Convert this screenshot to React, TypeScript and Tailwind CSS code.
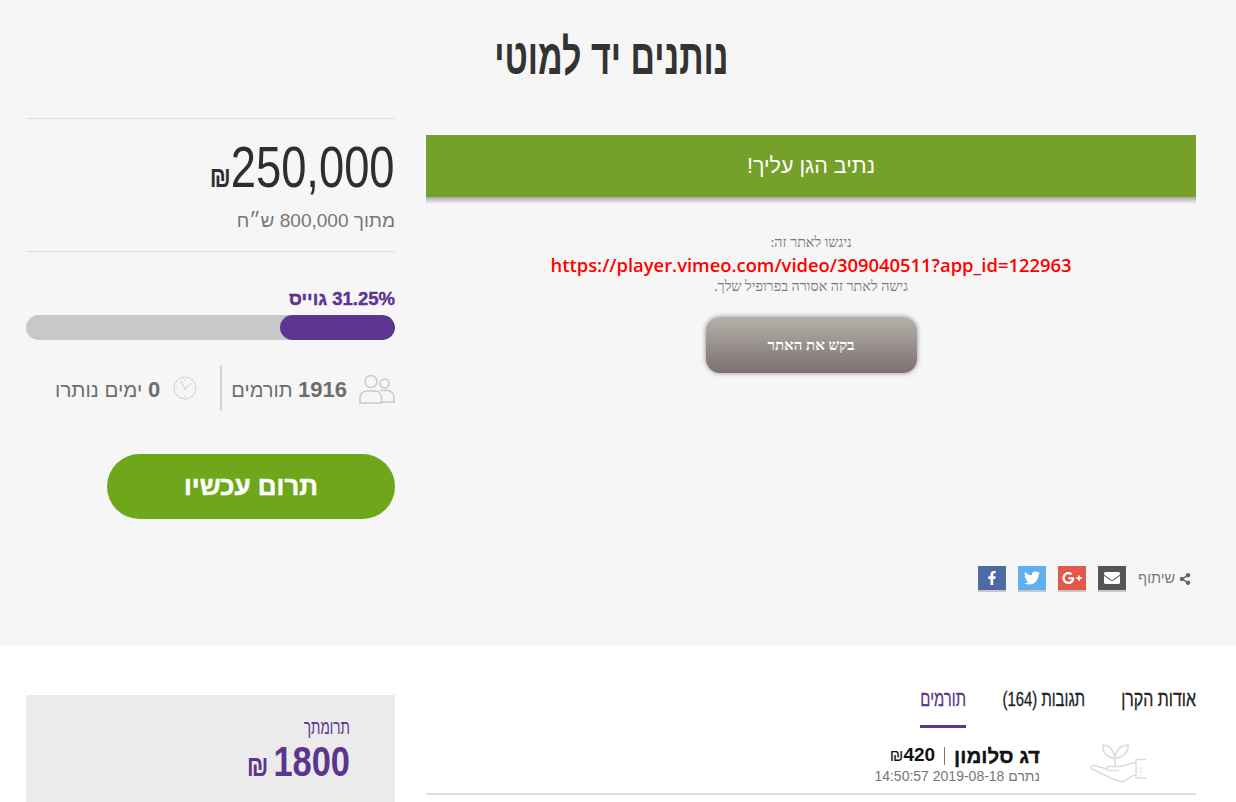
import { FaEnvelope, FaFacebookF, FaGooglePlusG, FaShareAlt, FaTwitter } from "react-icons/fa";

const sans = "font-['Liberation_Sans',sans-serif]";

function PeopleIcon() {
  return (
    <svg width="36" height="32" viewBox="0 0 36 32" fill="none" stroke="#cacaca" strokeWidth="1.6">
      <circle cx="12" cy="7.500" r="6" />
      <circle cx="25.500" cy="9.500" r="4.500" />
      <path d="M1 29v-5c0-4 3-7 7-7h8c4 0 6.500 3 6.500 7v5z" />
      <path d="M21 16.500h7c4 0 7 3 7 7V28H22.500" />
    </svg>
  );
}

function ClockIcon() {
  return (
    <svg width="24" height="24" viewBox="0 0 24 24" fill="none" stroke="#cfcfcf" strokeWidth="1">
      <circle cx="12" cy="12" r="11" />
      <circle cx="12" cy="12.500" r="1" />
      <path d="M12.500 12 18.500 7.500M11.500 11.500 8 5" />
      <path d="M12 3v1.500M12 19.500V21M3 12h1.500M19.500 12H21" />
    </svg>
  );
}

function PlantIcon() {
  return (
    <svg width="58" height="40" viewBox="0 0 58 40" fill="none" stroke="#dcdcdc" strokeWidth="1.600">
      <path d="M26 23V15M26 15c-1-7-5-13-12-13-1 7 4 13 12 13ZM26 15c0-7 6-13 13-13 1 7-5 13-13 13Z" />
      <path d="M57 16.500H47v18.500h10M47 19.500c-6 0-11 4-17 4H20c-3 0-3 4 0 4h10M47 32c-6 0-9 6.500-14 6.500-7 0-19-8-29-12-3-1-2-5 2-4l13 4" />
      <path d="M51 25h2M51 29h2" />
    </svg>
  );
}

const shares = [
  { bg: "bg-[#4c6aa3]", icon: <FaFacebookF size={14} /> },
  { bg: "bg-[#60b0f0]", icon: <FaTwitter size={16} /> },
  { bg: "bg-[#e2594b]", icon: <FaGooglePlusG size={20} /> },
  { bg: "bg-[#555555]", icon: <FaEnvelope size={16} /> },
];

export default function App() {
  return (
    <div className={`h-[802px] overflow-hidden bg-white ${sans}`}>
      <section className="h-[646px] bg-[#f6f6f6] pl-[26px] pr-[40px]">
        <h1 dir="rtl" className="flex h-[118px] items-start justify-center pt-[27px]">
          <span className="origin-center scale-x-[0.68] whitespace-nowrap text-[50px] leading-[60px] font-bold text-[#333333]">
            נותנים יד למוטי
          </span>
        </h1>

        <div className="flex gap-[31px]">
          <aside dir="rtl" className="w-[369px]">
            <div className="h-[134px] border-y border-[#dfdfdf]">
              <div className="flex h-[88px] items-end justify-start pb-[5px]">
                <span dir="ltr" className="flex origin-right scale-x-[0.795] items-baseline whitespace-nowrap text-[#2e2e2e]">
                  <span className="text-[30px] font-bold">₪</span>
                  <span className="text-[57px] leading-[70px] font-normal">250,000</span>
                </span>
              </div>
              <p className="text-[19px] leading-[28px] text-[#777777]">מתוך 800,000 ש״ח</p>
            </div>

            <p className="mt-[37px] text-[18.500px] leading-[20px] font-bold text-[#5c3590] [-webkit-text-stroke:0.4px_#5c3590]">
              <span dir="ltr">31.25%</span> גוייס
            </p>
            <div className="mt-[6px] flex h-[25px] overflow-hidden rounded-full bg-[#c8c8c8]">
              <div className="w-[115px] rounded-full bg-[#5c3590]" />
            </div>

            <div className="mt-[25px] flex h-[46px] items-center">
              <span className="mt-[4px] flex">
                <PeopleIcon />
              </span>
              <span className="mt-[2px] mr-[12px] text-[20px] text-[#6e6e6e]">
                <b className="text-[22px]">1916</b> תורמים
              </span>
              <div className="mr-[9px] ml-[23px] h-[46px] w-[2px] bg-[#d5d5d5]" />
              <ClockIcon />
              <span className="mt-[2px] mr-[13px] text-[20.500px] text-[#6e6e6e]">
                <b className="text-[22px]">0</b> ימים נותרו
              </span>
            </div>

            <button className="mt-[43px] flex h-[65px] w-[288px] items-center justify-center rounded-full bg-[#6ea71a] text-[26px] font-bold text-white [-webkit-text-stroke:0.5px_#ffffff]">
              תרום עכשיו
            </button>
          </aside>

          <main className="mt-[17px] w-[770px]">
            <div dir="rtl" className="flex h-[62px] items-center justify-center bg-[#75a12a] text-[21.500px] text-white">
              נתיב הגן עליך!
            </div>
            <div className="h-[7px] bg-gradient-to-b from-[#a8a8a8] to-[#f6f6f6]" />
            <div dir="rtl" className="mt-[30px] flex flex-col items-center">
              <p className="font-['Liberation_Serif',serif] text-[14.300px] leading-[16px] text-[#777777]">ניגשו לאתר זה:</p>
              <p dir="ltr" className="mt-[1px] font-['Open_Sans',sans-serif] text-[18.400px] leading-[27px] font-semibold text-[#ff0000]">
                https://player.vimeo.com/video/309040511?app_id=122963
              </p>
              <p className="font-['Liberation_Serif',serif] text-[14.300px] leading-[16px] text-[#777777]">גישה לאתר זה אסורה בפרופיל שלך.</p>
              <button className="mt-[23px] h-[56px] w-[211px] rounded-[14px] bg-gradient-to-b from-[#b6b1aa] to-[#7b7171] font-['Liberation_Serif',serif] text-[15px] font-bold text-white shadow-[0_0_5px_rgba(0,0,0,0.45)]">
                בקש את האתר
              </button>
            </div>
            <div className="mt-[193px] flex items-center justify-end">
              <div className="flex gap-[12px]">
                {shares.map((share, i) => (
                  <span key={i} className={`box-content flex h-[24px] w-[28px] items-center justify-center border-b-2 border-[#c8c8c8] text-white ${share.bg}`}>
                    {share.icon}
                  </span>
                ))}
              </div>
              <span dir="rtl" className="mr-[5px] ml-[12px] flex items-center gap-[4px] text-[14.500px] text-[#777777]">
                <FaShareAlt size={12} className="text-[#666666]" />
                שיתוף
              </span>
            </div>
          </main>
        </div>
      </section>

      <section className="flex gap-[31px] pt-[49px] pl-[26px] pr-[40px]">
        <aside dir="rtl" className="h-[107px] w-[369px] shrink-0 bg-[#ebebeb] pt-[20px] pr-[45px]">
          <p className="origin-right scale-x-[0.68] text-[20px] leading-[24px] text-[#5c3590]">תרומתך</p>
          <div dir="ltr" className="flex origin-right scale-x-[0.82] items-baseline justify-end gap-[6px] font-bold text-[#5c3590]">
            <span className="text-[30px]">₪</span>
            <span className="text-[42px] leading-[46px]">1800</span>
          </div>
        </aside>

        <main dir="rtl" className="-mt-[8px] w-[770px]">
          <nav className="flex h-[41px] gap-[37px] text-[21px] leading-[24px] text-[#222222] [-webkit-text-stroke:0.3px_currentColor]">
            <span className="flex w-[74px] origin-right scale-x-[0.76] whitespace-nowrap">אודות הקרן</span>
            <span className="flex w-[82px] origin-right scale-x-[0.71] whitespace-nowrap">תגובות (164)</span>
            <span className="h-[41px] w-[46px] border-b-[3px] border-[#5c3590] text-[#5c3590]">
              <span className="flex origin-right scale-x-[0.71] whitespace-nowrap">תורמים</span>
            </span>
          </nav>
          <div className="flex h-[67px] items-start border-b-2 border-[#dddddd] pt-[15px] pr-[49px]">
            <PlantIcon />
            <div className="mr-[49px]">
              <div className="flex items-center text-[#111111]">
                <span className="text-[20.500px] leading-[24px] font-bold [-webkit-text-stroke:0.3px_#111111]">דג סלומון</span>
                <span className="mx-[9px] h-[18px] w-px bg-[#777777]" />
                <span dir="ltr" className="flex items-baseline text-[19px] leading-[24px] font-bold">
                  <span className="text-[16px] font-normal">₪</span>420
                </span>
              </div>
              <p className="text-[14px] leading-[16px] text-[#777777]">נתרם 2019-08-18 14:50:57</p>
            </div>
          </div>
        </main>
      </section>
    </div>
  );
}
